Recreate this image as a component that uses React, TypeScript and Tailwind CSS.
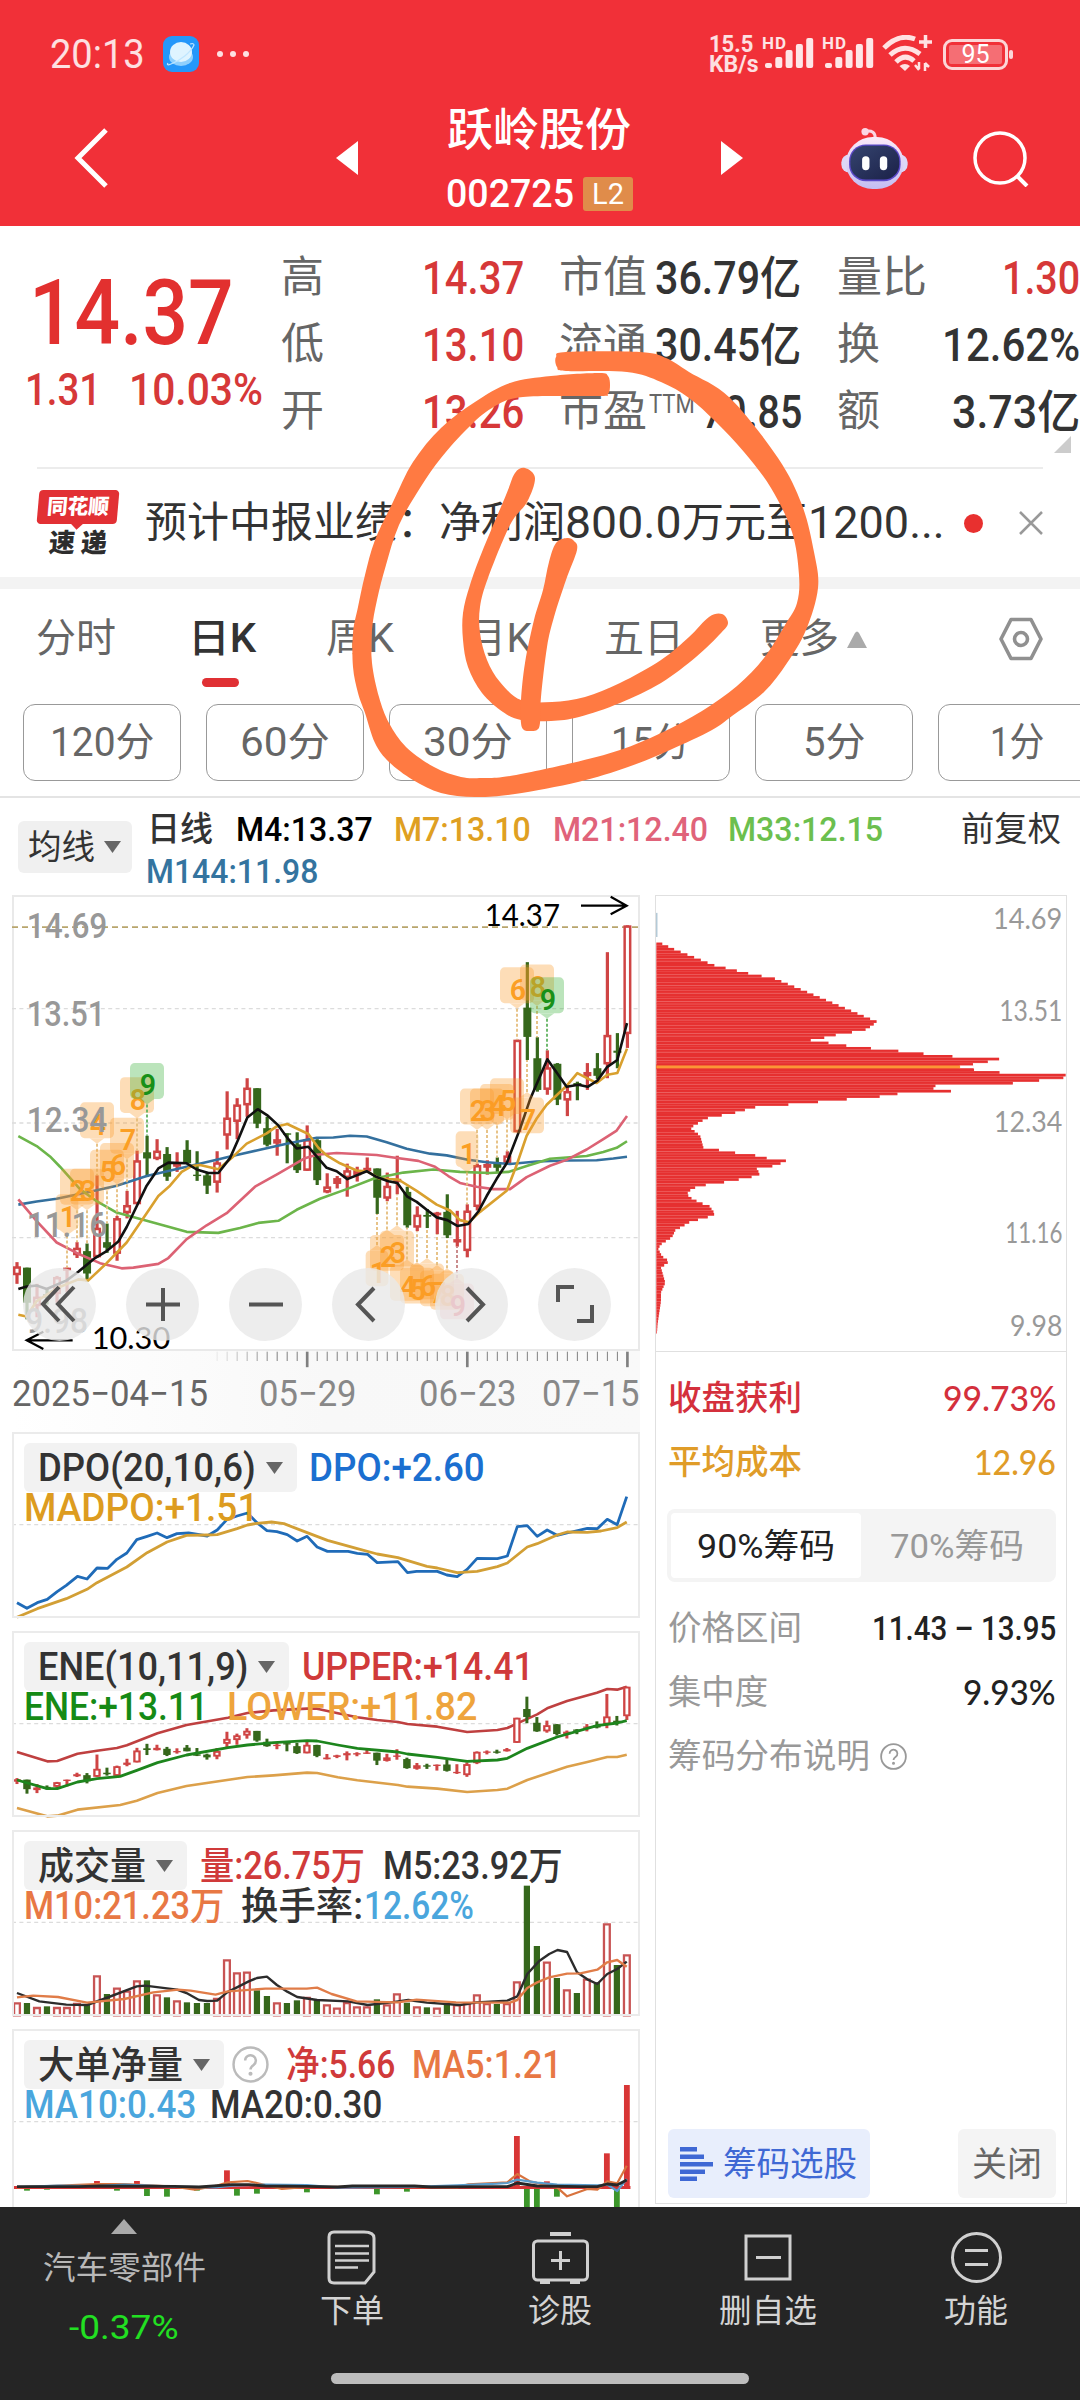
import React, { useLayoutEffect, useRef, useState } from 'react';

type Pt = [number, number];

/* Single-line label condensed or stretched to a fixed advance width. */
function T({ w, className = '', children }: { w: number; className?: string; children: React.ReactNode }) {
  const ref = useRef<HTMLSpanElement>(null);
  const [scale, setScale] = useState(1);
  useLayoutEffect(() => {
    if (ref.current) setScale(w / ref.current.offsetWidth);
  }, [w]);
  return (
    <span className={'inline-flex shrink-0 items-center whitespace-nowrap leading-none ' + className} style={{ width: w }}>
      <span ref={ref} className="inline-block shrink-0 origin-left" style={{ transform: `scaleX(${scale})` }}>
        {children}
      </span>
    </span>
  );
}

const pts = (s: string): Pt[] => s.trim().split(/\s+/).map((p) => p.split(',').map(Number) as Pt);

function Line({ d, c, w = 2.6 }: { d: string; c: string; w?: number }) {
  return <polyline points={d} fill="none" stroke={c} strokeWidth={w} strokeLinejoin="round" vectorEffect="non-scaling-stroke" />;
}

/* Closed Catmull-Rom outline through the given points. */
function smooth(points: Pt[]) {
  const n = points.length;
  let d = `M${points[0][0]},${points[0][1]}`;
  for (let i = 0; i < n; i++) {
    const a = points[(i - 1 + n) % n];
    const b = points[i];
    const c = points[(i + 1) % n];
    const e = points[(i + 2) % n];
    d += `C${b[0] + (c[0] - a[0]) / 6},${b[1] + (c[1] - a[1]) / 6} ${c[0] - (e[0] - b[0]) / 6},${c[1] - (e[1] - b[1]) / 6} ${c[0]},${c[1]}`;
  }
  return d + 'Z';
}

const RED = '#cf4444';
const GREEN = '#35671b';

/* high, body top, body bottom, low, colour */
const candles: [number, number, number, number, string][] = [
  [1112, 1124, 1150, 1175, 'r'], [1128, 1128, 1230, 1278, 'g'], [1175, 1212, 1240, 1272, 'r'], [1190, 1205, 1215, 1235, 'g'],
  [1152, 1155, 1205, 1230, 'r'], [1128, 1128, 1137, 1200, 'r'], [1054, 1070, 1092, 1100, 'r'], [1058, 1080, 1145, 1168, 'g'],
  [860, 1012, 1098, 1100, 'r'], [1000, 1054, 1070, 1085, 'g'], [978, 984, 1088, 1108, 'r'], [905, 946, 970, 985, 'r'],
  [788, 816, 944, 944, 'r'], [745, 793, 811, 865, 'g'], [755, 788, 813, 816, 'r'], [778, 798, 864, 876, 'g'],
  [793, 822, 835, 850, 'r'], [758, 786, 825, 825, 'g'], [790, 858, 862, 876, 'g'], [850, 860, 890, 914, 'g'],
  [790, 822, 882, 910, 'r'], [616, 692, 745, 785, 'r'], [636, 654, 705, 755, 'r'], [578, 605, 657, 690, 'r'],
  [607, 607, 710, 723, 'g'], [690, 723, 771, 776, 'g'], [725, 755, 768, 803, 'r'], [738, 738, 742, 825, 'g'],
  [735, 770, 845, 853, 'g'], [715, 755, 847, 847, 'r'], [755, 758, 874, 888, 'g'], [854, 892, 910, 912, 'r'],
  [862, 868, 885, 898, 'r'], [826, 845, 868, 922, 'r'], [835, 845, 860, 878, 'r'], [808, 838, 848, 852, 'r'],
  [840, 840, 925, 972, 'g'], [852, 890, 928, 935, 'r'], [803, 870, 880, 915, 'r'], [893, 908, 1005, 1012, 'g'],
  [950, 974, 1012, 1022, 'r'], [958, 975, 980, 1013, 'g'], [966, 968, 976, 1031, 'r'], [915, 966, 1034, 1042, 'g'],
  [963, 1045, 1055, 1067, 'r'], [944, 962, 1080, 1098, 'r'], [826, 830, 952, 962, 'r'], [816, 827, 838, 858, 'r'],
  [808, 827, 838, 850, 'g'], [790, 802, 825, 828, 'r'], [466, 466, 735, 735, 'r'], [241, 373, 458, 525, 'g'],
  [459, 520, 612, 617, 'g'], [497, 546, 612, 626, 'r'], [534, 536, 640, 656, 'g'], [603, 615, 643, 688, 'r'],
  [588, 592, 600, 642, 'g'], [534, 560, 572, 612, 'r'], [505, 549, 571, 580, 'g'], [212, 452, 538, 578, 'r'],
  [447, 498, 504, 549, 'g'], [134, 134, 450, 490, 'r'],
];

function Candles({ x0, dx, bw, y }: { x0: number; dx: number; bw: number; y: (v: number) => number }) {
  return (
    <g>
      {candles.map(([h, t, b, l, k], i) => {
        const x = x0 + dx * i;
        const c = k === 'r' ? RED : GREEN;
        const hollow = k === 'r' && b - t > 17;
        const inset = bw * 0.18;
        return (
          <g key={i}>
            <rect x={x - bw * 0.2} width={bw * 0.4} y={y(h)} height={Math.max(1, y(l) - y(h))} fill={c} />
            <rect x={x - bw / 2} width={bw} y={y(t)} height={Math.max(4, y(b) - y(t))} fill={c} />
            {hollow && (
              <rect x={x - bw * 0.19} width={bw * 0.38} y={y(t) + inset * 1.7} height={Math.max(0, y(b) - y(t) - inset * 3.4)} fill="#fff" />
            )}
          </g>
        );
      })}
    </g>
  );
}

/* x, box centre y, number, colour, pointer (1 down, -1 up), dash end y */
const flags: [number, number, string, string, number, number][] = [
  [201, 967, '1', 'o', 1, 1128], [231, 893, '2', 'o', 1, 1054], [261, 893, '3', 'o', 1, 1058], [291, 700, '4', 'o', 1, 860],
  [321, 838, '5', 'o', 1, 1000], [351, 818, '6', 'o', 1, 978], [381, 745, '7', 'o', 1, 905], [411, 627, '8', 'o', 1, 788],
  [441, 586, '9', 'g', 1, 745],
  [1131, 1130, '1', 'o', -1, 972], [1161, 1085, '2', 'o', -1, 935], [1191, 1073, '3', 'o', -1, 915], [1221, 1172, '4', 'o', -1, 1012],
  [1251, 1180, '5', 'o', -1, 1022], [1281, 1168, '6', 'o', -1, 1013], [1311, 1188, '7', 'o', -1, 1031], [1341, 1198, '8', 'o', -1, 1042],
  [1371, 1226, '9', 'r', -1, 1067],
  [1401, 784, '1', 'o', 1, 944], [1431, 660, '2', 'o', 1, 826], [1461, 660, '3', 'o', 1, 816], [1491, 647, '4', 'o', 1, 808],
  [1521, 630, '5', 'o', 1, 790], [1551, 308, '6', 'o', 1, 466], [1581, 686, '7', 'o', -1, 525], [1611, 300, '8', 'o', 1, 459],
  [1641, 337, '9', 'g', 1, 497],
];

function Flag({ f }: { f: [number, number, string, string, number, number] }) {
  const [x, y, n, k, dir, end] = f;
  const c = k === 'g' ? '#189018' : k === 'r' ? '#e8485a' : '#fb9f24';
  const bg = k === 'g' ? '#35ae35' : k === 'r' ? '#f06a70' : '#fb9a28';
  const edge = y + dir * 52;
  const half = n === '1' ? 34 : 51;
  return (
    <g>
      <line x1={x} x2={x} y1={edge + dir * 16} y2={end} stroke={k === 'g' ? '#5fb25f' : k === 'r' ? '#c58080' : '#e5bd7c'} strokeWidth="1.8" strokeDasharray="3 2" vectorEffect="non-scaling-stroke" />
      <g fill={bg} opacity="0.33">
        <rect x={x - half} y={y - 52} width={half * 2} height="104" rx="14" />
        <path d={`M${x - 22},${edge}L${x + 22},${edge}L${x},${edge + dir * 16}Z`} />
      </g>
      <text x={x + 3} y={y + 42} textAnchor="middle" fontSize="86" fontWeight="600" fill={c}>{n}</text>
    </g>
  );
}

function MainChart() {
  return (
    <svg className="absolute inset-0 h-full w-full overflow-visible" viewBox="36 46 1884 1324" preserveAspectRatio="none">
      {[376, 708, 1041].map((y) => (
        <line key={y} x1="36" x2="1920" y1={y} y2={y} stroke="#dcdcdc" strokeWidth="1.3" strokeDasharray="4 3.4" vectorEffect="non-scaling-stroke" />
      ))}
      <line x1="36" x2="1920" y1="139" y2="139" stroke="#b8a56c" strokeWidth="1.7" strokeDasharray="6 4" vectorEffect="non-scaling-stroke" />
      <Candles x0={51} dx={30.02} bw={24} y={(v) => v} />
      <Line c="#34709e" d="55,945 110,936 170,928 260,910 350,890 440,862 560,835 650,815 700,803 770,788 860,768 950,751 1000,750 1050,745 1100,747 1160,764 1220,783 1290,797 1340,802 1400,814 1460,822 1530,827 1610,820 1700,817 1790,816 1840,811 1881,806" />
      <Line c="#6cb54a" d="55,746 110,775 150,805 180,835 240,900 290,935 350,968 440,992 560,1024 655,1027 720,1013 775,998 835,992 890,960 960,928 1040,900 1120,870 1210,852 1300,843 1380,850 1470,853 1525,850 1580,833 1650,812 1700,808 1760,804 1810,792 1850,780 1881,761" />
      <Line c="#dc6274" d="55,930 110,993 170,1055 240,1090 300,1115 365,1130 400,1128 475,1117 505,1100 560,1045 620,1005 680,970 765,893 835,855 915,810 950,800 1010,795 1130,801 1180,808 1255,818 1305,835 1345,862 1380,882 1430,893 1480,900 1530,900 1580,865 1650,832 1700,815 1760,785 1810,755 1850,730 1881,688" />
      <Line c="#d9a02e" d="55,1265 80,1270 110,1225 170,1188 235,1162 265,1165 320,1115 380,1055 440,970 475,920 510,890 545,850 575,833 600,830 655,842 700,805 740,768 800,738 830,718 862,711 925,740 955,780 980,802 1020,825 1070,846 1100,848 1140,870 1195,872 1250,905 1310,945 1350,962 1380,990 1407,996 1440,966 1520,905 1550,830 1580,745 1610,695 1640,655 1700,600 1732,563 1790,592 1822,568 1852,563 1881,492" />
      <Line c="#111" d="55,1190 80,1183 110,1180 140,1190 200,1165 235,1140 285,1100 320,1080 355,1052 380,1010 440,890 475,840 505,823 560,825 590,843 625,853 655,853 690,810 715,755 742,692 773,668 801,685 835,715 865,755 890,782 925,777 950,805 980,838 1010,848 1042,871 1100,848 1130,865 1165,877 1192,882 1222,922 1250,937 1280,960 1310,982 1342,990 1372,1007 1405,1001 1435,965 1460,920 1490,870 1520,825 1560,725 1590,640 1642,523 1700,603 1735,597 1763,603 1792,585 1822,545 1852,525 1881,418" />
      {flags.map((f, i) => <Flag key={i} f={f} />)}
      <g fill="#989898" fontSize="104" fontWeight="500">
        <text x="80" y="170" textLength="242" lengthAdjust="spacingAndGlyphs">14.69</text>
        <text x="80" y="427" textLength="236" lengthAdjust="spacingAndGlyphs">13.51</text>
        <text x="80" y="735" textLength="242" lengthAdjust="spacingAndGlyphs">12.34</text>
        <text x="80" y="1038" textLength="242" lengthAdjust="spacingAndGlyphs">11.16</text>
        <text x="76" y="1318" textLength="188" lengthAdjust="spacingAndGlyphs">9.98</text>
      </g>
      <g fill="#000" fontSize="91" fontFamily="Lato">
        <text x="1454" y="135" textLength="226" lengthAdjust="spacingAndGlyphs">14.37</text>
        <text x="275" y="1364" textLength="236" lengthAdjust="spacingAndGlyphs">10.30</text>
      </g>
      <g fill="none" stroke="#000" strokeWidth="2.2">
        <path d="M1743,77H1880M1832,51L1880,77L1832,102" vectorEffect="non-scaling-stroke" />
        <path d="M218,1339H80M130,1314L80,1339L130,1364" vectorEffect="non-scaling-stroke" />
      </g>
    </svg>
  );
}

function RoundButton({ children }: { children: React.ReactNode }) {
  return (
    <button className="flex size-[73px] items-center justify-center rounded-full bg-[#e8e8e8]/80">
      <svg viewBox="0 0 73 73" className="size-full" fill="none" stroke="#555" strokeWidth="4">{children}</svg>
    </button>
  );
}

function DateAxis() {
  const ticks: number[] = [];
  for (let i = 20; i <= 61; i++) ticks.push(i);
  return (
    <div className="relative h-[81px] w-[628px] bg-linear-to-r from-white via-[#f8f8f8] to-[#f9f9f9]">
      <svg className="absolute inset-0 h-full w-full" viewBox="36 1370 1884 235" preserveAspectRatio="none">
        {ticks.map((i) => {
          const big = i === 29 || i === 45 || i === 61;
          return <rect key={i} x={51 + 30.02 * i - (big ? 4 : 1.5)} width={big ? 8 : 3} y="1372" height={big ? 45 : 27} fill="#808080" opacity={Math.min(1, 0.15 + (i - 20) * 0.15)} />;
        })}
      </svg>
      <div className="relative flex pt-[25px] text-[36px] text-[#888]">
        <T w={196} className="text-[#666]">2025−04−15</T>
        <T w={98} className="ml-[51px]">05−29</T>
        <T w={98} className="ml-[62px]">06−23</T>
        <T w={98} className="ml-[25px]">07−15</T>
      </div>
    </div>
  );
}

const chipShape = pts(
  '50,184 66,188 105,205 222,250 322,273 405,289 500,327 690,405 712,413 700,424 678,437 635,445 590,452 550,461 507,467 562,475 624,484 702,492 777,499 855,507 945,515 1082,522 1047,530 1001,538 1001,553 1076,561 1281,568 1281,576 1206,584 1131,592 889,600 877,607 938,616 777,623 723,631 621,639 532,647 440,655 347,662 315,670 285,678 243,686 200,694 150,722 180,745 190,780 227,785 273,793 341,801 373,809 440,818 407,832 350,840 360,856 342,863 303,871 252,880 200,887 163,896 142,908 145,922 180,940 207,948 225,972 207,980 150,995 105,1020 95,1040 65,1058 53,1072 65,1095 87,1110 62,1128 75,1172 62,1200 62,1225 52,1290 50,1316',
);

function chipWidth(y: number) {
  for (let i = 1; i < chipShape.length; i++) {
    const [x1, y1] = chipShape[i];
    const [x0, y0] = chipShape[i - 1];
    if (y <= y1) return x0 + ((x1 - x0) * (y - y0)) / (y1 - y0 || 1);
  }
  return 50;
}

function ChipChart() {
  const rows: number[] = [];
  for (let y = 188; y < 1316; y += 7.775) rows.push(y);
  const labels: [string, number, number][] = [['14.69', 146, 209], ['13.51', 412, 190], ['12.34', 735, 206], ['11.16', 1057, 172], ['9.98', 1327, 158]];
  return (
    <svg className="h-[455px] w-[410px] shrink-0" viewBox="47 49 1235 1321" preserveAspectRatio="none">
      <rect x="48" y="98" width="3" height="70" fill="#8fb0c4" />
      {rows.map((y, i) => (
        <g key={i}>
          <rect x="48" y={y - 3.9} width={Math.max(1, chipWidth(y) - 48)} height="7.9" fill="#e63030" />
          {i % 2 === 0 && <rect x="48" y={y + 2} width={Math.max(1, chipWidth(y) - 50)} height="1.6" fill="#f06060" opacity="0.7" />}
        </g>
      ))}
      <rect x="48" y="538" width="954" height="14" fill="#e63030" />
      <rect x="962" y="541" width="41" height="8" fill="#fff" />
      <rect x="48" y="541" width="915" height="8.5" fill="#fb9636" />
      <g fill="#999" fontSize="84" fontFamily="Lato">
        {labels.map(([s, y, w]) => (
          <text key={s} x={1271 - w} y={y} textLength={w} lengthAdjust="spacingAndGlyphs">{s}</text>
        ))}
      </g>
    </svg>
  );
}

const Caret = ({ className = '' }: { className?: string }) => (
  <svg viewBox="0 0 17 12" className={'h-3 w-[17px] shrink-0 ' + className}><path d="M0 0H17L8.5 12Z" fill="#666" /></svg>
);

function Panel({ box, svg, children, className = '' }: { box: string; svg: React.ReactNode; children: React.ReactNode; className?: string }) {
  return (
    <section className={'relative mt-[13px] h-[186px] w-[628px] shrink-0 ' + className}>
      <svg className="absolute left-0 top-0 h-[186px] w-full overflow-visible" viewBox={box} preserveAspectRatio="none">{svg}</svg>
      <div className="absolute inset-0 border-2 border-[#ebebeb]" />
      <div className="relative pl-[12px] pt-[11px] text-[38px] font-medium">{children}</div>
    </section>
  );
}

const Pill = ({ w, label, tw }: { w: number; label: string; tw: number }) => (
  <span className="flex h-[49px] shrink-0 items-center rounded-md bg-[#f2f2f2] pl-[14px] font-medium text-[#333]" style={{ width: w }}>
    <T w={tw}>{label}</T>
    <Caret className="ml-[10px]" />
  </span>
);

const Dash = ({ y }: { y: number }) => (
  <line x1="29" x2="1544" y1={y} y2={y} stroke="#dcdcdc" strokeWidth="1.3" strokeDasharray="4 3.4" vectorEffect="non-scaling-stroke" />
);

const volume =
  '551r 552g 565r 562g 565r 565r 553r 555g 470r 525g 507r 516r 485r 484g 527r 535g 545r 550g 552g 552g 538r 422r 461r 459r 514g 531g 551r 552g 544g 535r 543g 557r 567r 550r 563r 563r 541g 557r 524r 551g 563r 565g 567r 557g 557r 553r 527r 553r 555g 553r 488r 200g 381g 429r 477g 512r 522g 480r 490g 314r 438g 407r'.split(' ');

const netOrders: [number, number][] = [
  [0, 1101], [1, 1115], [3, 1112], [8, 1086], [10, 1115], [12, 1086], [13, 1131], [15, 1133], [18, 1115], [21, 1054], [22, 1130], [24, 1124],
  [29, 1120], [36, 1126], [39, 1118], [50, 951], [51, 1176], [52, 1176], [53, 1087], [54, 1133], [59, 1003], [60, 1176], [61, 798],
];

function Help({ className = '' }: { className?: string }) {
  return (
    <svg viewBox="0 0 36 36" className={'shrink-0 ' + className} fill="none" stroke="currentColor" strokeWidth="2.4">
      <circle cx="18" cy="18" r="16.5" />
      <path d="M12.8 14.2a5.2 5.2 0 1 1 8.2 4.2c-2 1.400-3 2.200-3 4.400" />
      <circle cx="18" cy="27" r="0.800" fill="currentColor" />
    </svg>
  );
}

function StatusBar() {
  const bars = [5, 11, 18, 24, 30];
  return (
    <div className="flex h-[108px] items-center pl-[50px] text-white/85">
      <T w={95} className="mt-[2px] text-[40px]">20:13</T>
      <svg viewBox="0 0 36 36" className="ml-[18px] size-[36px] shrink-0">
        <rect width="36" height="36" rx="9" fill="#2497fa" />
        <ellipse cx="18" cy="21" rx="12" ry="9" fill="#8fd0fd" />
        <ellipse cx="18" cy="16" rx="11" ry="10" fill="#dff4ff" />
        <path d="M5 27Q3 30 8 28C17 25 28 16 31 9Q31 7 27 8" fill="none" stroke="#bfe6ff" strokeWidth="1.2" />
      </svg>
      <span className="ml-[18px] flex gap-[7px]">
        <i className="size-[6px] rounded-full bg-white/85" /><i className="size-[6px] rounded-full bg-white/85" /><i className="size-[6px] rounded-full bg-white/85" />
      </span>
      <span className="ml-[460px] flex w-[50px] flex-col gap-[1px] text-[23px] font-bold leading-[19px]">
        <T w={44} className="h-[19px]">15.5</T>
        <T w={50} className="h-[19px]">KB/s</T>
      </span>
      {[0, 1].map((k) => (
        <svg key={k} viewBox="0 0 54 36" className={'h-[36px] w-[54px] shrink-0 overflow-visible ' + (k ? 'ml-[6px]' : 'ml-[3px]')} fill="#fff" fillOpacity="0.88">
          <text x="0" y="13" fontSize="17" fontWeight="700" textLength="24">HD</text>
          {bars.map((h, i) => <rect key={i} x={3 + i * 10.3} y={32 - h} width="7" height={h} rx="2" />)}
        </svg>
      ))}
      <svg viewBox="0 0 50 38" className="ml-[6px] h-[38px] w-[50px] shrink-0" fill="none" stroke="#ffe2e3" strokeWidth="5">
        <path d="M2 13Q17-2 33 4" /><path d="M8 20Q22 7 38 19" /><path d="M14 27Q23 18 32 26" />
        <path d="M17.500 31Q23 27 28 31L23 36Z" fill="#ffe2e3" stroke="none" />
        <path d="M37 7H50M43.500 0V13" strokeWidth="3.500" />
        <path d="M37 27V34M33 30L37 35M43 36V28M47 32L43 28" strokeWidth="2.500" />
      </svg>
      <span className="ml-[11px] flex h-[31px] w-[65px] shrink-0 items-center justify-center rounded-[9px] border-[3px] border-white/80 p-[3px]">
        <span className="flex h-full w-full items-center justify-center rounded-[2px] bg-white/30 text-[25px] leading-none text-white">95</span>
      </span>
      <i className="ml-[1px] h-[9px] w-[4px] shrink-0 rounded bg-white/80" />
    </div>
  );
}

function Header() {
  return (
    <header className="h-[226px] shrink-0 bg-[#f13038]">
      <StatusBar />
      <div className="flex h-[100px] items-center text-white">
        <svg viewBox="0 0 34 60" className="ml-[74px] h-[60px] w-[34px] shrink-0" fill="none" stroke="#fff" strokeWidth="5"><path d="M32 2L4 30L32 58" /></svg>
        <svg viewBox="0 0 22 34" className="ml-[228px] h-[34px] w-[22px] shrink-0" fill="#fff"><path d="M22 0V34L0 17Z" /></svg>
        <div className="ml-[89px] w-[190px] self-start">
          <div className="flex h-[44px] items-center text-[45px] font-medium"><T w={184}>跃岭股份</T></div>
          <div className="mt-[25px] flex h-[34px] items-center">
            <T w={128} className="-ml-[1px] text-[39px] font-medium">002725</T>
            <span className="ml-[9px] flex h-[34px] w-[50px] items-center justify-center rounded-[3px] bg-[#e08c4a] text-[29px] leading-none">L2</span>
          </div>
        </div>
        <svg viewBox="0 0 22 34" className="ml-[84px] h-[34px] w-[22px] shrink-0" fill="#fff"><path d="M0 0V34L22 17Z" /></svg>
        <svg viewBox="425 318 200 188" className="ml-[98px] h-[63px] w-[67px] shrink-0">
          <defs>
            <linearGradient id="shell" x1="0" y1="0" x2="0" y2="1"><stop offset="0" stopColor="#fbe9f8" /><stop offset="1" stopColor="#c3bdf3" /></linearGradient>
            <linearGradient id="visor" x1="0" y1="0" x2="1" y2="1"><stop offset="0" stopColor="#35446f" /><stop offset="1" stopColor="#1b2148" /></linearGradient>
          </defs>
          <path d="M498 331Q528 326 527 352" fill="none" stroke="#fbd5e4" strokeWidth="9" />
          <circle cx="497" cy="332" r="11" fill="#fbd5e4" />
          <rect x="426" y="400" width="198" height="54" rx="24" fill="#dcd8f8" />
          <rect x="440" y="348" width="172" height="155" rx="80" fill="url(#shell)" />
          <rect x="449" y="370" width="154" height="110" rx="50" fill="#5a48c8" />
          <rect x="453" y="374" width="146" height="101" rx="46" fill="url(#visor)" />
          <rect x="488" y="405" width="22" height="42" rx="11" fill="#fff" /><rect x="541" y="405" width="22" height="42" rx="11" fill="#fff" />
        </svg>
        <svg viewBox="0 0 56 56" className="ml-[65px] mt-[2px] size-[56px] shrink-0" fill="none" stroke="#fff" strokeWidth="3.500"><circle cx="27" cy="27" r="25" /><path d="M44 45L54 55" strokeWidth="4" /></svg>
      </div>
    </header>
  );
}

function Quote() {
  return (
    <section className="flex h-[241px] shrink-0 pt-[18px]">
      <div className="w-[280px] shrink-0 text-[#e2302f]">
        <div className="mt-[24px] flex h-[92px] items-center pl-[29px]"><T w={205} className="text-[90px] font-medium">14.37</T></div>
        <div className="mt-[5px] flex h-[48px] items-center pl-[25px] text-[45px] font-medium text-[#d63838]">
          <T w={76}>1.31</T><T w={134} className="ml-[28px]">10.03%</T>
        </div>
      </div>
      <div className="w-[244px] shrink-0 text-[43px] text-[#666]">
        {[['高', '14.37'], ['低', '13.10'], ['开', '13.26']].map(([a, b]) => (
          <div key={a} className="flex h-[67px] items-center">
            <T w={43} className="ml-[1px]">{a}</T><T w={102} className="ml-[98px] text-[46px] font-medium text-[#d63838]">{b}</T>
          </div>
        ))}
      </div>
      <div className="ml-[35px] w-[244px] shrink-0 text-[43px] text-[#666]">
        <div className="flex h-[67px] items-center"><T w={88}>市值</T><T w={146} className="ml-[8px] text-[46px] font-medium text-[#333]">36.79亿</T></div>
        <div className="flex h-[67px] items-center"><T w={88}>流通</T><T w={146} className="ml-[8px] text-[46px] font-medium text-[#333]">30.45亿</T></div>
        <div className="flex h-[67px] items-center">
          <T w={88}>市盈</T><T w={46} className="-mt-[14px] ml-[2px] text-[25px]">TTM</T><T w={100} className="ml-[7px] text-[46px] font-medium text-[#333]">70.85</T>
        </div>
      </div>
      <div className="ml-[34px] w-[243px] shrink-0 text-[43px] text-[#666]">
        <div className="flex h-[67px] items-center justify-between"><T w={90}>量比</T><T w={78} className="text-[46px] font-medium text-[#d63838]">1.30</T></div>
        <div className="flex h-[67px] items-center justify-between"><T w={43}>换</T><T w={138} className="text-[46px] font-medium text-[#333]">12.62%</T></div>
        <div className="flex h-[67px] items-center justify-between"><T w={43}>额</T><T w={128} className="text-[46px] font-medium text-[#333]">3.73亿</T></div>
        <svg viewBox="0 0 17 17" className="-mt-[9px] ml-[217px] size-[17px]"><path d="M17 0V17H0Z" fill="#ccc" /></svg>
      </div>
    </section>
  );
}

function News() {
  return (
    <section className="mx-[37px] flex h-[110px] shrink-0 items-center border-t-2 border-[#ececec]">
      <div className="flex w-[82px] shrink-0 flex-col items-center">
        <div className="relative flex h-[34px] w-[80px] -skew-x-[5deg] items-center justify-center rounded-[4px] bg-[#e23034] text-white">
          <T w={62} className="text-[21px] font-black">同花顺</T>
          <i className="absolute -bottom-[4px] left-[36px] size-[9px] rotate-45 bg-[#e23034]" />
        </div>
        <div className="mt-[6px] flex -skew-x-[5deg] gap-[6px] text-[26px] font-black leading-none text-[#2d2d2d]"><span>速</span><span>递</span></div>
      </div>
      <div className="ml-[26px] flex items-center text-[42px] text-[#333]">
        <T w={294}>预计中报业绩：</T><T w={126}>净利润</T><T w={117} className="text-[44px]">800.0</T><T w={126}>万元至</T><T w={137} className="text-[44px]">1200...</T>
      </div>
      <i className="ml-[19px] size-[19px] rounded-full bg-[#e8302f]" />
      <svg viewBox="0 0 24 24" className="ml-[36px] size-[24px]" stroke="#999" strokeWidth="2.500"><path d="M1 1L23 23M23 1L1 23" /></svg>
    </section>
  );
}

function Periods() {
  return (
    <section className="h-[209px] shrink-0 border-b-2 border-[#e4e4e4]">
      <div className="flex h-[96px] items-center pl-[36px] pt-[4px] text-[40px] text-[#666]">
        <T w={80}>分时</T>
        <div className="relative ml-[72px] flex font-medium text-[#333]">
          <T w={68}>日K</T>
          <i className="absolute left-[14px] top-[59px] h-[9px] w-[37px] rounded-full bg-[#e03034]" />
        </div>
        <T w={68} className="ml-[70px]">周K</T>
        <T w={66} className="ml-[72px]">月K</T>
        <T w={80} className="ml-[72px]">五日</T>
        <T w={79} className="ml-[76px]">更多</T>
        <svg viewBox="0 0 20 17" className="ml-[8px] h-[17px] w-[20px]"><path d="M0 17L8 2Q10-1 12 2L20 17Z" fill="#aaa" /></svg>
        <svg viewBox="0 0 44 44" className="ml-[132px] size-[44px]" fill="none" stroke="#909090" strokeWidth="3.600" strokeLinejoin="round"><path d="M12 2.500H32L42 22L32 41.500H12L2 22Z" /><circle cx="22" cy="22" r="6.500" /></svg>
      </div>
      <div className="flex gap-[25px] pl-[23px] pt-[19px] text-[40px] text-[#666]">
        {([['120分', 104], ['60分', 90], ['30分', 90], ['15分', 80], ['5分', 62], ['1分', 54]] as [string, number][]).map(([s, w]) => (
          <div key={s} className="flex h-[77px] w-[158px] shrink-0 items-center justify-center rounded-xl border border-[#999]"><T w={w}>{s}</T></div>
        ))}
      </div>
    </section>
  );
}

function Legend() {
  return (
    <section className="flex h-[97px] shrink-0 pl-[18px] pt-[23px] text-[34px] text-[#333]">
      <div className="flex h-[52px] w-[114px] shrink-0 items-center rounded-md bg-[#f0f0f0] pl-[10px]">
        <T w={67}>均线</T><Caret className="ml-[9px]" />
      </div>
      <div className="-mt-[12px] ml-[14px] w-[795px] shrink-0 font-medium">
        <div className="flex h-[40px] items-center">
          <T w={66} className="ml-[1px]">日线</T>
          <T w={137} className="ml-[23px] text-black">M4:13.37</T>
          <T w={137} className="ml-[21px] text-[#dfa022]">M7:13.10</T>
          <T w={155} className="ml-[22px] text-[#e0637a]">M21:12.40</T>
          <T w={155} className="ml-[20px] text-[#6cbf4e]">M33:12.15</T>
        </div>
        <div className="flex h-[44px] items-center"><T w={172} className="text-[#34749f]">M144:11.98</T></div>
      </div>
      <T w={100} className="-mt-[10px] ml-[20px] h-[36px]">前复权</T>
    </section>
  );
}

function LeftColumn() {
  return (
    <div className="w-[628px] shrink-0">
      <div className="relative h-[456px] w-[628px] border-2 border-[#e9e9e9]">
        <div className="absolute -inset-[2px]"><MainChart /></div>
        <div className="absolute left-[9px] top-[371px] flex gap-[30px]">
          <RoundButton><path d="M36 19L20 36L36 53M51 19L35 36L51 53" /></RoundButton>
          <RoundButton><path d="M20 36.500H54M37 20V53" /></RoundButton>
          <RoundButton><path d="M20 36.500H54" /></RoundButton>
          <RoundButton><path d="M42 20L26 36.500L42 53" /></RoundButton>
          <RoundButton><path d="M32 20L48 36.500L32 53" /></RoundButton>
          <RoundButton><path d="M20 34V19H36M39 53H54V37" /></RoundButton>
        </div>
      </div>
      <DateAxis />
      <Panel
        className="!mt-0"
        box="29 68 1515 558"
        svg={
          <>
            <Dash y={346} />
            <Line c="#1f6bb8" w={2.8} d="41,580 65,597 90,580 114,570 138,547 160,528 187,501 210,509 234,476 260,477 282,450 306,431 330,391 355,381 379,371 403,385 427,373 455,371 500,380 524,362 548,330 572,320 597,311 620,340 644,364 668,367 693,376 717,395 741,381 765,413 790,426 840,426 862,432 887,435 910,460 960,457 983,490 1005,486 1055,486 1078,497 1103,502 1127,480 1151,447 1200,448 1224,440 1248,352 1272,349 1296,381 1320,362 1344,378 1368,371 1417,357 1441,358 1465,330 1489,346 1512,262" />
            <Line c="#d29f35" w={2.8} d="41,624 90,598 160,568 210,540 234,520 306,473 355,430 403,398 450,378 500,377 524,376 572,358 597,347 620,342 655,338 685,343 741,370 790,393 862,418 910,434 960,445 1030,471 1055,476 1103,490 1151,486 1200,472 1224,461 1272,413 1296,403 1344,377 1368,368 1417,369 1450,365 1489,355 1512,338" />
          </>
        }
      >
        <div className="flex items-center"><Pill w={273} label="DPO(20,10,6)" tw={218} /><T w={176} className="ml-[12px] text-[#1b6fd0]">DPO:+2.60</T></div>
        <div className="-mt-[3px] flex"><T w={234} className="text-[#dd9c20]">MADPO:+1.51</T></div>
      </Panel>
      <Panel
        box="29 665 1515 558"
        svg={
          <>
            <Dash y={943} />
            <Line c="#bf4040" d="41,1028 114,1056 138,1055 187,1033 234,1024 282,1016 306,1008 380,972 450,947 550,925 597,911 660,903 741,898 765,898 815,912 862,924 910,932 960,938 983,944 1055,952 1127,968 1200,962 1224,956 1248,942 1296,915 1320,897 1368,875 1440,850 1465,839 1489,841 1512,832" />
            <Candles x0={41} dx={24.12} bw={18} y={(v) => 832 + (v - 134) * 0.2806} />
            <Line c="#1d851d" w={2.8} d="41,1112 114,1138 138,1138 187,1118 234,1108 290,1101 330,1083 380,1060 450,1037 550,1015 597,1007 660,1000 741,994 765,995 815,1007 862,1017 960,1028 983,1034 1055,1044 1127,1056 1200,1052 1224,1047 1272,1017 1344,983 1417,957 1440,949 1489,941 1512,934" />
            <Line c="#dca04a" d="41,1196 114,1221 138,1219 187,1201 290,1187 330,1174 380,1151 450,1130 597,1103 660,1098 741,1090 765,1091 815,1104 862,1113 960,1127 983,1132 1055,1138 1127,1148 1200,1142 1224,1138 1272,1112 1368,1072 1417,1058 1465,1043 1489,1043 1512,1036" />
          </>
        }
      >
        <div className="flex items-center"><Pill w={265} label="ENE(10,11,9)" tw={210} /><T w={232} className="ml-[13px] text-[#d03a3a]">UPPER:+14.41</T></div>
        <div className="-mt-[3px] flex"><T w={184} className="text-[#158a15]">ENE:+13.11</T><T w={250} className="ml-[19px] text-[#eea43c]">LOWER:+11.82</T></div>
      </Panel>
      <Panel
        box="29 33 1515 558"
        svg={
          <>
            <Dash y={310} />
            {volume.map((s, i) => {
              const top = parseInt(s, 10);
              const x = 41 + 24.12 * i;
              return s.endsWith('g') ? (
                <rect key={i} x={x - 7.5} y={top} width="15" height={591 - top} fill={GREEN} />
              ) : (
                <rect key={i} x={x - 7} y={top + 2} width="14" height={587 - top} fill="#fff" stroke="#c85454" strokeWidth="2.3" vectorEffect="non-scaling-stroke" />
              );
            })}
            <Line c="#2c2c2c" w={2.4} d="41,522 95,547 160,557 210,558 250,540 330,502 350,500 427,512 450,522 480,543 500,546 524,545 548,520 600,487 620,477 644,473 668,498 693,518 717,534 765,543 840,547 887,558 940,551 985,543 1030,551 1110,558 1150,550 1224,545 1248,532 1272,465 1300,427 1325,405 1345,393 1368,399 1392,460 1417,481 1441,495 1465,465 1489,450 1512,428" />
            <Line c="#e07c48" w={2.4} d="41,535 80,530 140,534 210,551 300,540 370,520 430,512 460,515 520,527 550,517 640,509 740,509 765,506 800,525 860,547 960,550 1005,542 1100,550 1230,551 1248,543 1272,507 1296,490 1325,475 1368,464 1400,463 1441,452 1465,430 1489,423 1512,443" />
          </>
        }
      >
        <div className="flex items-center"><Pill w={163} label="成交量" tw={108} /><T w={165} className="ml-[13px] text-[#d03a3a]">量:26.75万</T><T w={180} className="ml-[18px] text-[#333]">M5:23.92万</T></div>
        <div className="-mt-[3px] flex"><T w={200} className="text-[#e87844]">M10:21.23万</T><T w={122} className="ml-[17px] text-[#333]">换手率:</T><T w={110} className="ml-[1px] text-[#4aa6dd]">12.62%</T></div>
      </Panel>
      <Panel
        box="29 630 1515 558"
        svg={
          <>
            <Dash y={908} />
            {netOrders.map(([i, v]) => (
              <rect key={i} x={41 + 24.12 * i - 7} width="14" y={Math.min(v, 1105)} height={Math.abs(v - 1105)} fill={v < 1105 ? '#d83636' : '#3c962a'} />
            ))}
            <rect x="29" y="1101" width="1492" height="9" fill="#d83636" />
            <Line c="#d8733e" w={2.2} d="41,1105 234,1095 300,1095 420,1103 470,1112 524,1100 550,1090 597,1086 640,1098 680,1110 740,1104 900,1103 1103,1105 1130,1096 1224,1090 1248,1065 1280,1088 1344,1105 1368,1132 1417,1110 1441,1112 1465,1087 1489,1093 1512,1040" />
            <Line c="#5a9ccc" w={2.2} d="41,1104 140,1100 234,1101 300,1097 420,1103 520,1105 560,1100 640,1097 740,1098 815,1106 980,1104 1103,1099 1200,1094 1224,1092 1248,1082 1296,1091 1344,1097 1441,1099 1465,1097 1489,1116 1512,1080" />
            <Line c="#272727" w={2.8} d="41,1103 190,1103 240,1101 420,1102 480,1104 560,1097 600,1097 640,1101 740,1102 815,1104 850,1101 1000,1101 1040,1104 1200,1103 1224,1103 1248,1092 1296,1101 1400,1103 1441,1103 1465,1095 1489,1098 1512,1083" />
          </>
        }
      >
        <div className="flex items-center"><Pill w={200} label="大单净量" tw={145} /><Help className="ml-[8px] size-[37px] text-[#bbb]" /><T w={109} className="ml-[17px] text-[#d03a3a]">净:5.66</T><T w={150} className="ml-[17px] text-[#e87844]">MA5:1.21</T></div>
        <div className="-mt-[3px] flex"><T w={172} className="text-[#4aa6dd]">MA10:0.43</T><T w={172} className="ml-[14px] text-[#333]">MA20:0.30</T></div>
      </Panel>
    </div>
  );
}

function RightColumn() {
  return (
    <aside className="flex h-[1309px] w-[412px] shrink-0 flex-col border border-[#e0e0e0] text-[34px] text-[#999]">
      <ChipChart />
      <div className="flex flex-1 flex-col border-t border-[#e0e0e0] pl-[12px] pr-[10px]">
        <div className="mt-[14px] flex h-[64px] items-center justify-between font-medium text-[#d4303c]"><T w={134}>收盘获利</T><T w={113} className="font-['Lato']">99.73%</T></div>
        <div className="flex h-[64px] items-center justify-between font-medium text-[#e09c28]"><T w={134}>平均成本</T><T w={82} className="font-['Lato']">12.96</T></div>
        <div className="-ml-px mt-[15px] flex h-[73px] w-[389px] items-center rounded-lg bg-[#f4f4f4] p-1">
          <div className="flex h-full w-[190px] items-center justify-center rounded bg-white text-[#222]"><T w={138}>90%筹码</T></div>
          <div className="flex flex-1 justify-center"><T w={134}>70%筹码</T></div>
        </div>
        <div className="mt-[14px] flex h-[64px] items-center justify-between"><T w={134}>价格区间</T><T w={184} className="font-medium text-[#222]">11.43 – 13.95</T></div>
        <div className="flex h-[64px] items-center justify-between"><T w={100}>集中度</T><T w={93} className="font-['Lato'] font-medium text-[#222]">9.93%</T></div>
        <div className="flex h-[64px] items-center"><T w={202}>筹码分布说明</T><Help className="ml-[10px] size-[27px]" /></div>
        <div className="mb-[5px] mt-auto flex h-[69px] justify-between">
          <div className="flex w-[202px] items-center rounded-md bg-[#e8eefc] pl-[12px] text-[#3f68d4]">
            <svg viewBox="0 0 33 34" className="h-[34px] w-[33px]" fill="#3f68d4"><path d="M0 0H17V4.500H0ZM0 7.500H24V12H0ZM0 15H33V19.500H0ZM0 22.500H25V27H0ZM0 29.500H17V34H0Z" /></svg>
            <T w={134} className="ml-[10px]">筹码选股</T>
          </div>
          <div className="flex w-[98px] items-center justify-center rounded-md bg-[#f4f4f4] text-[#666]"><T w={70}>关闭</T></div>
        </div>
      </div>
    </aside>
  );
}

function NavItem({ label, w, children, className = '' }: { label: string; w: number; children: React.ReactNode; className?: string }) {
  return (
    <div className={'flex w-[110px] shrink-0 flex-col items-center pt-[21px] ' + className}>
      <svg viewBox="0 0 60 60" className="size-[60px]" fill="none" stroke="#d0d0d0" strokeWidth="3">{children}</svg>
      <T w={w} className="mt-[7px] text-[32px] text-[#d4d4d4]">{label}</T>
    </div>
  );
}

function BottomNav() {
  return (
    <nav className="h-[193px] shrink-0 bg-[#252525]">
      <div className="flex h-[166px]">
        <div className="ml-[23px] flex w-[202px] shrink-0 flex-col items-center pt-[12px] text-[32px] text-[#b8b8b8]">
          <svg viewBox="0 0 26 15" className="h-[15px] w-[26px]"><path d="M13 0L26 15H0Z" fill="#aaa" /></svg>
          <T w={163} className="mt-[18px]">汽车零部件</T>
          <T w={110} className="mt-[26px] text-[34px] text-[#22e022]">-0.37%</T>
        </div>
        <NavItem label="下单" w={64} className="ml-[72px]">
          <path d="M12 4H42Q52 4 52 10V44L43 55H12Q7 55 7 50V9Q7 4 12 4Z" /><path d="M13 18H47M13 25.500H47M13 32.500H47M13 39.500H36" strokeWidth="2.600" />
        </NavItem>
        <NavItem label="诊股" w={64} className="ml-[98px]">
          <rect x="3.500" y="13" width="54" height="39" rx="4" /><path d="M20 6H41M10 54H20M40 54H50" strokeWidth="4" /><path d="M30.500 23V42M21 32.500H40" />
        </NavItem>
        <NavItem label="删自选" w={98} className="ml-[98px]">
          <rect x="8" y="8" width="44" height="43" /><path d="M18 29.500H43" />
        </NavItem>
        <NavItem label="功能" w={64} className="ml-[98px]">
          <circle cx="30.500" cy="29.500" r="24" /><path d="M19 22.500H42M19 36.500H42" />
        </NavItem>
      </div>
      <i className="mx-auto block h-[11px] w-[418px] rounded-full bg-[#bdbdbd]" />
    </nav>
  );
}

const loop = pts('566,352 640,352 666,358 689,372 730,398 778,458 802,505 814,552 818,588 806,630 787,663 764,692 732,716 712,730 670,750 628,767 578,782 515,794 475,797 441,793 413,780 389,762 375,743 365,713 358,693 353,667 353,633 358,607 365,575 375,540 393,502 413,462 441,428 475,402 510,383 551,376 599,373 608,376 610,385 608,394 599,396 523,397 492,408 468,428 441,458 420,488 399,525 386,565 377,600 372,630 372,663 379,697 389,723 406,747 434,767 461,777 482,778 510,776 572,763 620,750 661,733 702,711 737,686 764,658 785,625 797,603 799,575 792,532 771,488 744,452 716,422 689,398 661,382 627,372 566,371 557,367 556,357');
const hook = pts('525,468 515,473 506,495 482,552 470,585 463,613 463,640 468,667 482,693 503,712 521,720 551,721 579,717 620,703 661,683 696,657 721,633 728,623 722,614 709,617 689,637 661,660 620,683 585,697 552,702 521,700 500,682 487,660 480,633 480,607 488,578 510,525 527,502 535,478');
const dart = pts('567,538 556,543 549,562 543,590 534,620 525,663 521,700 521,723 524,730 530,731 537,730 540,723 541,697 547,647 554,617 566,580 577,550 574,541');

export default function App() {
  return (
    <main className="relative flex h-[2400px] w-[1080px] flex-col overflow-hidden bg-white font-['Roboto','Noto_Sans_CJK_SC',sans-serif]">
      <Header />
      <Quote />
      <News />
      <div className="h-[12px] shrink-0 bg-[#f3f3f3]" />
      <Periods />
      <Legend />
      <div className="flex h-[1312px] shrink-0 gap-[15px] overflow-hidden pl-[12px]">
        <LeftColumn />
        <RightColumn />
      </div>
      <BottomNav />
      <svg className="pointer-events-none absolute left-0 top-0 h-[900px] w-[1080px]" viewBox="0 0 1080 900" fill="#ff7a42">
        <path d={smooth(loop)} /><path d={smooth(hook)} /><path d={smooth(dart)} />
      </svg>
    </main>
  );
}
